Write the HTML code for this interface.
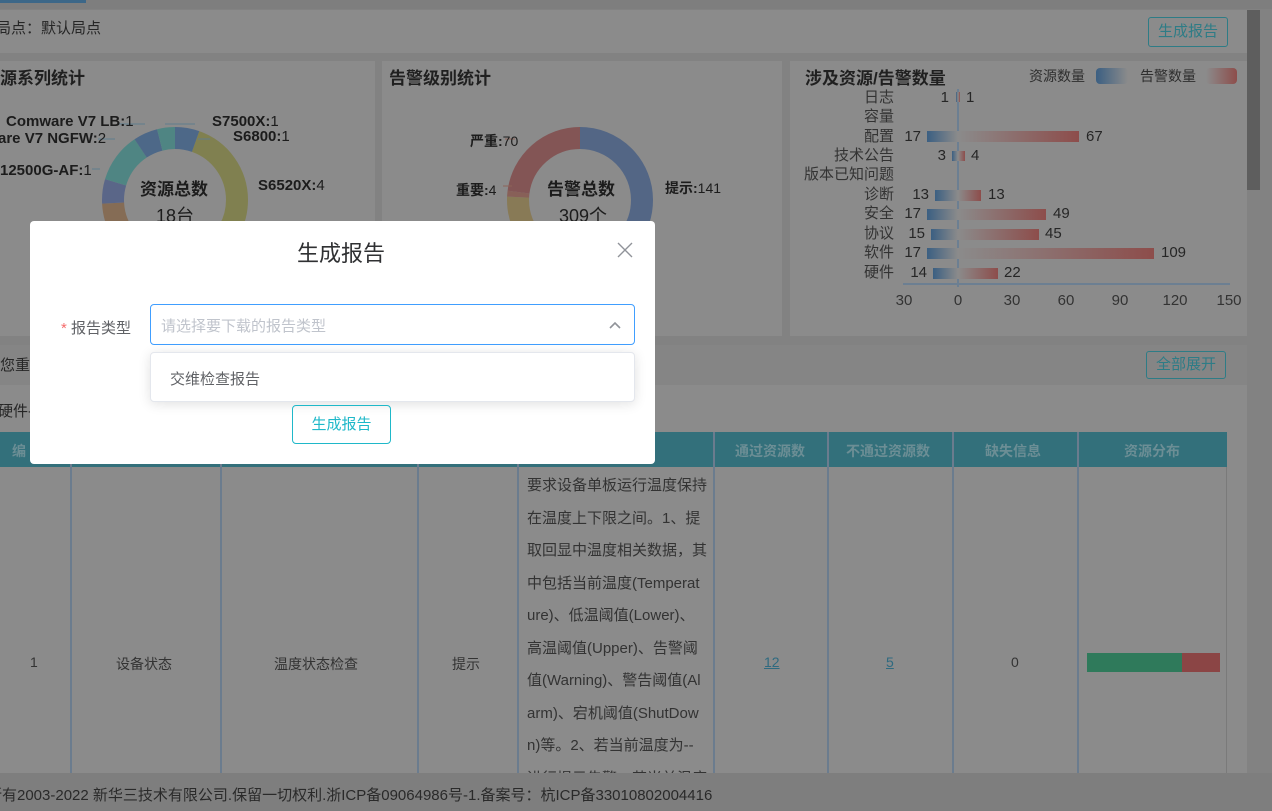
<!DOCTYPE html>
<html><head><meta charset="utf-8">
<style>
*{margin:0;padding:0;box-sizing:border-box}
body{width:1272px;height:811px;overflow:hidden;background:#828282;font-family:"Liberation Sans","Noto Sans CJK SC",sans-serif;position:relative;color:#1c1c1c}
.abs{position:absolute}
.panel{position:absolute;background:#8b8b8b}
.t{position:absolute;white-space:nowrap}
.b{font-weight:bold}
</style></head><body>
<div class="abs" style="left:0;top:0;width:1272px;height:9px;background:#7e7e7e"></div>
<div class="abs" style="left:0;top:0;width:86px;height:3px;background:#3c6788"></div>
<div class="panel" style="left:0;top:10px;width:1247px;height:43px"></div>
<div class="t" style="left:-4px;top:17px;font-size:15px;color:#262626">局点：默认局点</div>
<div class="abs" style="left:1148px;top:17px;width:80px;height:30px;border:1px solid #2e7c86;border-radius:3px;color:#2e7c86;font-size:15px;text-align:center;line-height:28px">生成报告</div>
<div class="abs" style="left:1247px;top:10px;width:13px;height:180px;background:#5e5e5e"></div>

<div class="panel" style="left:0;top:61px;width:375px;height:275px"></div>
<div class="panel" style="left:382px;top:61px;width:400px;height:275px"></div>
<div class="panel" style="left:790px;top:61px;width:457px;height:275px"></div>
<div class="t b" style="left:0;top:64px;font-size:17px;color:#202020">源系列统计</div>
<div class="t b" style="left:389px;top:64px;font-size:17px;color:#202020">告警级别统计</div>
<div class="t b" style="left:805px;top:64px;font-size:17px;color:#202020">涉及资源/告警数量</div>

<svg class="abs" style="left:0;top:61px" width="782" height="275">
<g transform="translate(175,139) rotate(-90)" fill="none" stroke-width="22">
<circle r="62" stroke="#808050" stroke-dasharray="108 282" stroke-dashoffset="-21"/>
<circle r="62" stroke="#856c55" stroke-dasharray="60 330" stroke-dashoffset="-229"/>
<circle r="62" stroke="#5a6688" stroke-dasharray="21 369" stroke-dashoffset="-289"/>
<circle r="62" stroke="#4f8583" stroke-dasharray="43 347" stroke-dashoffset="-310"/>
<circle r="62" stroke="#4d6888" stroke-dasharray="21 369" stroke-dashoffset="-353"/>
<circle r="62" stroke="#4f8583" stroke-dasharray="16 374" stroke-dashoffset="-374"/>
<circle r="62" stroke="#4d6888" stroke-dasharray="21 369" stroke-dashoffset="0"/>
</g>
<g transform="translate(580,139) rotate(-90)" fill="none" stroke-width="22">
<circle r="62" stroke="#536685" stroke-dasharray="178 212"/>
<circle r="62" stroke="#887a56" stroke-dasharray="117 273" stroke-dashoffset="-178"/>
<circle r="62" stroke="#886058" stroke-dasharray="5 385" stroke-dashoffset="-295"/>
<circle r="62" stroke="#835555" stroke-dasharray="90 300" stroke-dashoffset="-300"/>
</g>
<g stroke="#5f7c8e" stroke-width="1" fill="none">
<path d="M118 63 L145 63 M165 63 L195 63 M98 78 L115 78 M198 78 L210 78 M92 108 L100 108"/>
<path d="M505 78 L515 78" stroke="#8c6358"/><path d="M503 125 L512 125" stroke="#8c6358"/>
</g>
</svg>
<div class="t b" style="left:6px;top:113px;font-size:15px">Comware V7 LB:<span style="font-weight:normal">1</span></div>
<div class="t b" style="left:-2px;top:130px;font-size:15px">are V7 NGFW:<span style="font-weight:normal">2</span></div>
<div class="t b" style="left:0;top:162px;font-size:15px">12500G-AF:<span style="font-weight:normal">1</span></div>
<div class="t b" style="left:212px;top:113px;font-size:15px">S7500X:<span style="font-weight:normal">1</span></div>
<div class="t b" style="left:233px;top:128px;font-size:15px">S6800:<span style="font-weight:normal">1</span></div>
<div class="t b" style="left:258px;top:177px;font-size:15px">S6520X:<span style="font-weight:normal">4</span></div>
<div class="t b" style="left:140px;top:175px;font-size:17px">资源总数</div>
<div class="t" style="left:156px;top:202px;font-size:18px">18台</div>
<div class="t b" style="left:470px;top:131px;font-size:14px">严重:<span style="font-weight:normal">70</span></div>
<div class="t b" style="left:456px;top:180px;font-size:14px">重要:<span style="font-weight:normal">4</span></div>
<div class="t b" style="left:665px;top:178px;font-size:14px">提示:<span style="font-weight:normal">141</span></div>
<div class="t b" style="left:547px;top:175px;font-size:17px">告警总数</div>
<div class="t" style="left:559px;top:202px;font-size:18px">309个</div>

<div class="t" style="left:1029px;top:66px;font-size:14px;color:#2e2e2e">资源数量</div>
<div class="abs" style="left:1096px;top:68px;width:32px;height:16px;border-radius:4px;background:linear-gradient(90deg,#3b5f82,#8b8b8b)"></div>
<div class="t" style="left:1140px;top:66px;font-size:14px;color:#2e2e2e">告警数量</div>
<div class="abs" style="left:1206px;top:68px;width:31px;height:16px;border-radius:4px;background:linear-gradient(90deg,#8b8b8b,#8d4d4b)"></div>
<svg class="abs" style="left:790px;top:61px" width="470" height="260" font-family="Liberation Sans,Noto Sans CJK SC,sans-serif" font-size="15" fill="#262626">
<defs>
<linearGradient id="bl" x1="0" x2="1"><stop offset="0" stop-color="#3b5f82"/><stop offset="1" stop-color="#8b8b8b"/></linearGradient>
<linearGradient id="rd" x1="0" x2="1"><stop offset="0" stop-color="#8b8b8b"/><stop offset="1" stop-color="#8d4d4b"/></linearGradient>
</defs>
<line x1="168" y1="28" x2="168" y2="226" stroke="#6c7f92" stroke-width="2"/>
<line x1="113" y1="223" x2="440" y2="223" stroke="#6c7f92" stroke-width="2"/>
<g text-anchor="end" fill="#333">
<text x="104" y="41">日志</text><text x="104" y="60">容量</text><text x="104" y="80">配置</text><text x="104" y="99">技术公告</text><text x="104" y="118">版本已知问题</text><text x="104" y="138">诊断</text><text x="104" y="157">安全</text><text x="104" y="177">协议</text><text x="104" y="196">软件</text><text x="104" y="216">硬件</text>
</g>
<g>
<rect x="166" y="31" width="2" height="10" fill="url(#bl)"/><rect x="168" y="31" width="2" height="10" fill="url(#rd)"/>
<rect x="137" y="70" width="31" height="11" fill="url(#bl)"/><rect x="168" y="70" width="121" height="11" fill="url(#rd)"/>
<rect x="162" y="90" width="6" height="10" fill="url(#bl)"/><rect x="168" y="90" width="7" height="10" fill="url(#rd)"/>
<rect x="145" y="129" width="23" height="11" fill="url(#bl)"/><rect x="168" y="129" width="23" height="11" fill="url(#rd)"/>
<rect x="137" y="148" width="31" height="11" fill="url(#bl)"/><rect x="168" y="148" width="88" height="11" fill="url(#rd)"/>
<rect x="141" y="168" width="27" height="11" fill="url(#bl)"/><rect x="168" y="168" width="81" height="11" fill="url(#rd)"/>
<rect x="137" y="187" width="31" height="11" fill="url(#bl)"/><rect x="168" y="187" width="196" height="11" fill="url(#rd)"/>
<rect x="143" y="207" width="25" height="11" fill="url(#bl)"/><rect x="168" y="207" width="40" height="11" fill="url(#rd)"/>
</g>
<g>
<text x="159" y="41" text-anchor="end">1</text><text x="176" y="41">1</text>
<text x="131" y="80" text-anchor="end">17</text><text x="296" y="80">67</text>
<text x="156" y="99" text-anchor="end">3</text><text x="181" y="99">4</text>
<text x="139" y="138" text-anchor="end">13</text><text x="198" y="138">13</text>
<text x="131" y="157" text-anchor="end">17</text><text x="263" y="157">49</text>
<text x="135" y="177" text-anchor="end">15</text><text x="255" y="177">45</text>
<text x="131" y="196" text-anchor="end">17</text><text x="371" y="196">109</text>
<text x="137" y="216" text-anchor="end">14</text><text x="214" y="216">22</text>
</g>
<g text-anchor="middle" fill="#333">
<text x="114" y="244">30</text><text x="168" y="244">0</text><text x="222" y="244">30</text><text x="276" y="244">60</text><text x="330" y="244">90</text><text x="385" y="244">120</text><text x="439" y="244">150</text>
</g>
</svg>

<div class="panel" style="left:0;top:345px;width:1247px;height:40px;background:#858585"></div>
<div class="t" style="left:0;top:354px;font-size:15px;color:#262626">您重</div>
<div class="abs" style="left:1146px;top:351px;width:80px;height:28px;border:1px solid #2e7c86;border-radius:3px;color:#2e7c86;font-size:15px;text-align:center;line-height:26px">全部展开</div>
<div class="panel" style="left:0;top:385px;width:1247px;height:388px"></div>
<div class="t" style="left:-2px;top:400px;font-size:15px;color:#262626">硬件-</div>

<div class="abs" style="left:0;top:432px;width:1227px;height:35px;background:#33707b"></div>
<div class="t b" style="left:12px;top:441px;font-size:14px;color:#6c8e95">编</div>
<div class="t b" style="left:735px;top:441px;font-size:14px;color:#6c8e95">通过资源数</div>
<div class="t b" style="left:846px;top:441px;font-size:14px;color:#6c8e95">不通过资源数</div>
<div class="t b" style="left:985px;top:441px;font-size:14px;color:#6c8e95">缺失信息</div>
<div class="t b" style="left:1124px;top:441px;font-size:14px;color:#6c8e95">资源分布</div>
<div class="abs" style="left:0;top:432px;width:1227px;height:341px;pointer-events:none">
<div class="abs" style="left:70px;top:0;width:2px;height:341px;background:#6b7c8e"></div>
<div class="abs" style="left:220px;top:0;width:2px;height:341px;background:#6b7c8e"></div>
<div class="abs" style="left:417px;top:0;width:2px;height:341px;background:#6b7c8e"></div>
<div class="abs" style="left:517px;top:0;width:2px;height:341px;background:#6b7c8e"></div>
<div class="abs" style="left:713px;top:0;width:2px;height:341px;background:#6b7c8e"></div>
<div class="abs" style="left:827px;top:0;width:2px;height:341px;background:#6b7c8e"></div>
<div class="abs" style="left:952px;top:0;width:2px;height:341px;background:#6b7c8e"></div>
<div class="abs" style="left:1077px;top:0;width:2px;height:341px;background:#6b7c8e"></div>
<div class="abs" style="left:1226px;top:35px;width:1px;height:306px;background:#7a7a7a"></div>
</div>
<div class="t" style="left:30px;top:654px;font-size:14px;color:#333">1</div>
<div class="t" style="left:116px;top:654px;font-size:14px;color:#333">设备状态</div>
<div class="t" style="left:274px;top:654px;font-size:14px;color:#333">温度状态检查</div>
<div class="t" style="left:452px;top:654px;font-size:14px;color:#333">提示</div>
<div class="abs" style="left:527px;top:470px;width:180px;font-size:15px;line-height:32.5px;color:#333;word-break:break-all;height:303px;overflow:hidden">要求设备单板运行温度保持在温度上下限之间。1、提取回显中温度相关数据，其中包括当前温度(Temperature)、低温阈值(Lower)、高温阈值(Upper)、告警阈值(Warning)、警告阈值(Alarm)、宕机阈值(ShutDown)等。2、若当前温度为--进行提示告警，若当前温度</div>
<div class="t" style="left:764px;top:654px;font-size:14px;color:#2f6a80;text-decoration:underline">12</div>
<div class="t" style="left:886px;top:654px;font-size:14px;color:#2f6a80;text-decoration:underline">5</div>
<div class="t" style="left:1011px;top:654px;font-size:14px;color:#333">0</div>
<div class="abs" style="left:1087px;top:653px;width:95px;height:19px;background:#2f7a5b"></div>
<div class="abs" style="left:1182px;top:653px;width:38px;height:19px;background:#8b4545"></div>

<div class="abs" style="left:0;top:773px;width:1272px;height:38px;background:#7e7e7e"></div>
<div class="t" style="left:-13px;top:784px;font-size:15px;color:#2a2a2a">所有2003-2022 新华三技术有限公司.保留一切权利.浙ICP备09064986号-1.备案号：杭ICP备33010802004416</div>

<div class="abs" style="left:30px;top:221px;width:625px;height:243px;background:#fff;border-radius:4px"></div>
<div class="t" style="left:297px;top:236px;font-size:22px;color:#303133">生成报告</div>
<svg class="abs" style="left:616px;top:241px" width="18" height="18"><path d="M2 2L16 16M16 2L2 16" stroke="#909399" stroke-width="1.4"/></svg>
<div class="t" style="left:61px;top:317px;font-size:15px;color:#606266"><span style="color:#f56c6c">*</span> 报告类型</div>
<div class="abs" style="left:150px;top:304px;width:485px;height:41px;border:1px solid #409eff;border-radius:4px"></div>
<div class="t" style="left:161px;top:315px;font-size:15px;color:#c0c4cc">请选择要下载的报告类型</div>
<svg class="abs" style="left:608px;top:319px" width="14" height="12"><path d="M2 9L7 4L12 9" stroke="#909399" stroke-width="1.6" fill="none"/></svg>
<div class="abs" style="left:150px;top:352px;width:485px;height:50px;background:#fff;border:1px solid #e4e7ed;border-radius:4px;box-shadow:0 2px 12px rgba(0,0,0,.12)"></div>
<div class="t" style="left:170px;top:368px;font-size:15px;color:#606266">交维检查报告</div>
<div class="abs" style="left:292px;top:405px;width:99px;height:39px;border:1px solid #1fb8c9;border-radius:4px;color:#1fb8c9;font-size:15px;text-align:center;line-height:37px">生成报告</div>
</body></html>
